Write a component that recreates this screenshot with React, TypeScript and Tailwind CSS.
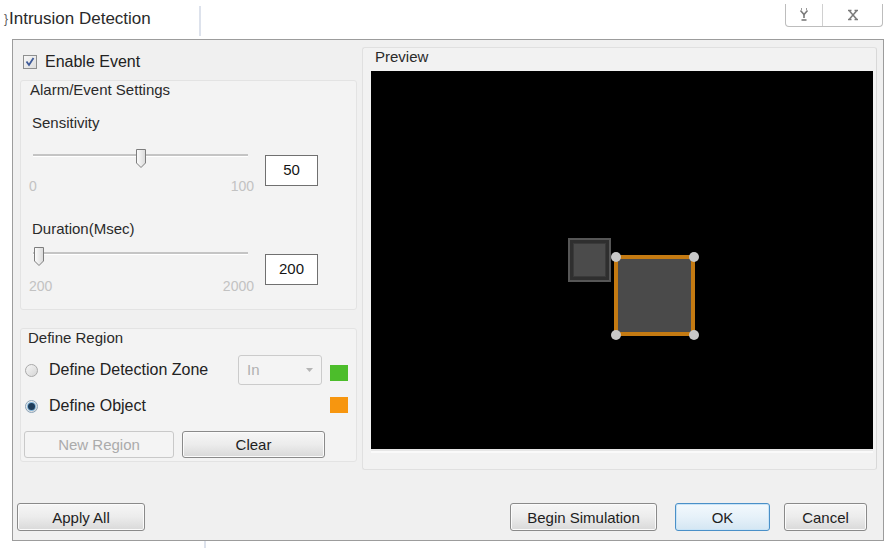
import React from "react";

function Btn({ children, className = "", disabled = false, primary = false }: { children: React.ReactNode; className?: string; disabled?: boolean; primary?: boolean }) {
  const base = "flex items-center justify-center rounded-[3px] text-[15px] leading-none";
  const style = disabled
    ? "border border-[#c9c9c9] bg-[#f4f4f4] text-[#ababab]"
    : primary
    ? "border border-[#4a90c8] bg-gradient-to-b from-[#f3f9fd] via-[#e6f1f9] to-[#d4e6f3] text-[#1e1e1e] shadow-[inset_0_0_0_1px_#c9e4f7]"
    : "border border-[#8a8a8a] bg-gradient-to-b from-[#f6f6f6] via-[#ececec] to-[#d9d9d9] text-[#1e1e1e] shadow-[inset_0_0_0_1px_#fbfbfb]";
  return <div className={`${base} ${style} ${className}`}>{children}</div>;
}

function Slider({ frac, min, max, labelGap }: { frac: number; min: string; max: string; labelGap: number }) {
  const thumbLeft = 4 + frac * (215 - 12);
  return (
    <div className="w-[225px]">
      <div className="relative h-[24px]">
        <div className="absolute left-[4px] top-[8px] h-[2px] w-[215px] bg-[#c4c4c4] shadow-[0_1px_0_#ffffff]" />
        <div className="absolute top-[2px]" style={{ left: thumbLeft }}>
          <svg width="12" height="21" viewBox="0 0 12 21">
            <defs>
              <linearGradient id="tg" x1="0" y1="0" x2="1" y2="0">
                <stop offset="0" stopColor="#fdfdfd" />
                <stop offset="1" stopColor="#d9d9d9" />
              </linearGradient>
            </defs>
            <path d="M1.5 1.5 H10.5 V15 L6 19.5 L1.5 15 Z" fill="url(#tg)" stroke="#7d7d7d" strokeWidth="1" />
          </svg>
        </div>
      </div>
      <div className="flex justify-between text-[14px] leading-[16px] text-[#c2c2c2]" style={{ marginTop: labelGap }}>
        <span>{min}</span>
        <span>{max}</span>
      </div>
    </div>
  );
}

function TextBox({ value }: { value: string }) {
  return (
    <div className="w-[53px] h-[31px] border border-[#707070] bg-white flex items-center justify-center text-[15px] text-[#151515]">
      {value}
    </div>
  );
}

function Radio({ checked }: { checked: boolean }) {
  return (
    <div className={`w-[13px] h-[13px] rounded-full border ${checked ? "border-[#8aa3b8]" : "border-[#a9a9a9]"} bg-gradient-to-br from-[#f6f6f6] to-[#d5d5d5] flex items-center justify-center`}>
      {checked && <div className="w-[7px] h-[7px] rounded-full bg-[#1f3d5a] shadow-[0_0_0_1px_#7fb3d9]" />}
    </div>
  );
}

export default function App() {
  return (
    <div className="w-[892px] h-[548px] bg-white overflow-hidden font-['Liberation_Sans',Arial,sans-serif] text-[#222] flex flex-col">
      {/* title bar */}
      <div className="h-[39px] flex items-start shrink-0">
        <div className="pl-[4px] pt-[9px] flex items-center h-[29px] text-[17px] leading-[20px] text-[#2a2a2a]">
          <span className="text-[12px] text-[#555] mr-[1px]">{"}"}</span>
          <span>Intrusion Detection</span>
        </div>
        <div className="ml-[48px] mt-[6px] w-[2px] h-[30px] bg-[#dde2ec]" />
        <div className="flex-1" />
        <div className="mt-[4px] mr-[9px] h-[23px] w-[98px] border border-t-0 border-[#bdbdbd] rounded-b-[4px] flex">
          <div className="w-[37px] border-r border-[#d0d0d0] flex items-center justify-center">
            <svg width="14" height="14" viewBox="0 0 14 14" fill="none" stroke="#7a7a7a" strokeWidth="1.6">
              <path d="M3.5 2.5 L7 6.5 L10.5 2.5" />
              <path d="M7 6.5 V10" />
              <path d="M4.5 12 H9.5" />
              <path d="M4 1 H5" />
              <path d="M9 1 H10" />
            </svg>
          </div>
          <div className="flex-1 flex items-center justify-center">
            <svg width="14" height="12" viewBox="0 0 14 12" fill="none" stroke="#7a7a7a" strokeWidth="1.5">
              <path d="M3.5 2 L10.5 10" />
              <path d="M10.5 2 L3.5 10" />
              <path d="M2 1.5 H5.5" />
              <path d="M8.5 1.5 H12" />
              <path d="M2 10.5 H5.5" />
              <path d="M8.5 10.5 H12" />
            </svg>
          </div>
        </div>
      </div>

      {/* main panel */}
      <div className="ml-[12px] w-[872px] h-[502px] border border-[#9c9c9c] bg-[#f0f0f0] flex flex-col shrink-0">
        <div className="flex">
          {/* left column */}
          <div className="w-[344px] pl-[7px] flex flex-col">
            <div className="mt-[12px] h-[20px] flex items-center">
              <div className="ml-[3px] w-[14px] h-[14px] border border-[#8e8f8f] bg-gradient-to-br from-[#f7f7f7] to-[#dedede] flex items-center justify-center">
                <svg width="10" height="10" viewBox="0 0 10 10" fill="none" stroke="#3e5a98" strokeWidth="1.8">
                  <path d="M1.5 4.5 L4 8 L8.5 1" />
                </svg>
              </div>
              <span className="ml-[8px] text-[16px]">Enable Event</span>
            </div>

            {/* Alarm/Event group */}
            <div className="mt-[8px] h-[230px] border border-[#e3e3e3] rounded-[3px] bg-[#f3f3f3] flex flex-col">
              <div className="pl-[9px] h-[18px] leading-[18px] text-[15px] text-[#2a2a2a]">Alarm/Event Settings</div>
              <div className="mt-[15px] pl-[11px] h-[18px] leading-[18px] text-[15px] text-[#2a2a2a]">Sensitivity</div>
              <div className="mt-[14px] pl-[8px] flex items-start">
                <Slider frac={0.5} min="0" max="100" labelGap={8} />
                <div className="ml-[11px] mt-[9px]">
                  <TextBox value="50" />
                </div>
              </div>
              <div className="mt-[26px] pl-[11px] h-[18px] leading-[18px] text-[15px] text-[#2a2a2a]">Duration(Msec)</div>
              <div className="mt-[6px] pl-[8px] flex items-start">
                <Slider frac={0} min="200" max="2000" labelGap={10} />
                <div className="ml-[11px] mt-[10px]">
                  <TextBox value="200" />
                </div>
              </div>
            </div>

            {/* Define Region group */}
            <div className="mt-[18px] h-[134px] border border-[#e3e3e3] rounded-[3px] bg-[#f3f3f3] flex flex-col">
              <div className="pl-[7px] h-[18px] leading-[18px] text-[15px] text-[#2a2a2a]">Define Region</div>
              <div className="mt-[8px] h-[30px] flex items-center">
                <div className="w-[217px] pl-[4px] flex items-center">
                  <Radio checked={false} />
                  <span className="ml-[11px] text-[16px]">Define Detection Zone</span>
                </div>
                <div className="w-[84px] h-[30px] border border-[#cbcbcb] rounded-[3px] bg-[#f4f4f4] flex items-center justify-between pl-[8px] pr-[8px] text-[15px] text-[#b0b0b0]">
                  <span>In</span>
                  <svg width="7" height="4" viewBox="0 0 7 4"><path d="M0 0 H7 L3.5 4 Z" fill="#b5b5b5" /></svg>
                </div>
                <div className="ml-[8px] mt-[6px] w-[18px] h-[16px] bg-[#4cbd2b]" />
              </div>
              <div className="mt-[6px] h-[30px] flex items-center">
                <div className="w-[217px] pl-[4px] flex items-center">
                  <Radio checked={true} />
                  <span className="ml-[11px] text-[16px]">Define Object</span>
                </div>
                <div className="w-[84px]" />
                <div className="ml-[8px] mt-[-2px] w-[18px] h-[16px] bg-[#f7960f]" />
              </div>
              <div className="mt-[10px] pl-[3px] flex gap-[8px]">
                <Btn disabled className="w-[150px] h-[27px]">New Region</Btn>
                <Btn className="w-[143px] h-[27px]">Clear</Btn>
              </div>
            </div>
          </div>

          {/* Preview group */}
          <div className="ml-[5px] mt-[7px] w-[515px] h-[423px] border border-[#e0e0e0] border-r-[#d8d8d8] rounded-[3px] bg-[#f2f2f2] pl-[8px] pr-[3px] flex flex-col">
            <div className="pl-[4px] h-[18px] leading-[18px] text-[15px] text-[#2a2a2a]">Preview</div>
            <div className="mt-[5px] w-[502px] h-[378px] bg-black relative shadow-[0_2px_0_#e6e6e6,0_4px_0_#fafafa]">
              {/* small square */}
              <div className="absolute left-[197px] top-[167px] w-[43px] h-[44px] border-2 border-[#565656] bg-[#2f2f2f] p-[3px]">
                <div className="w-full h-full bg-[#4b4b4b] border border-[#3a3a3a]" />
              </div>
              {/* big square */}
              <div className="absolute left-[243px] top-[184px] w-[81px] h-[81px] border-[4px] border-[#c47a12] bg-[#4a4a4a]" />
              <div className="absolute left-[240px] top-[181px] w-[10px] h-[10px] rounded-full bg-[#c8c8c8]" />
              <div className="absolute left-[318px] top-[181px] w-[10px] h-[10px] rounded-full bg-[#c8c8c8]" />
              <div className="absolute left-[240px] top-[259px] w-[10px] h-[10px] rounded-full bg-[#c8c8c8]" />
              <div className="absolute left-[318px] top-[259px] w-[10px] h-[10px] rounded-full bg-[#c8c8c8]" />
            </div>
          </div>
        </div>

        <div className="flex-1" />

        {/* bottom buttons */}
        <div className="pl-[4px] pr-[16px] pb-[9px] flex items-center">
          <Btn className="w-[128px] h-[28px]">Apply All</Btn>
          <div className="flex-1" />
          <Btn className="w-[147px] h-[28px]">Begin Simulation</Btn>
          <Btn primary className="ml-[18px] w-[95px] h-[28px]">OK</Btn>
          <Btn className="ml-[14px] w-[83px] h-[28px]">Cancel</Btn>
        </div>
      </div>
      <div className="ml-[204px] w-[2px] h-[7px] bg-[#dde2ec]" />
    </div>
  );
}
